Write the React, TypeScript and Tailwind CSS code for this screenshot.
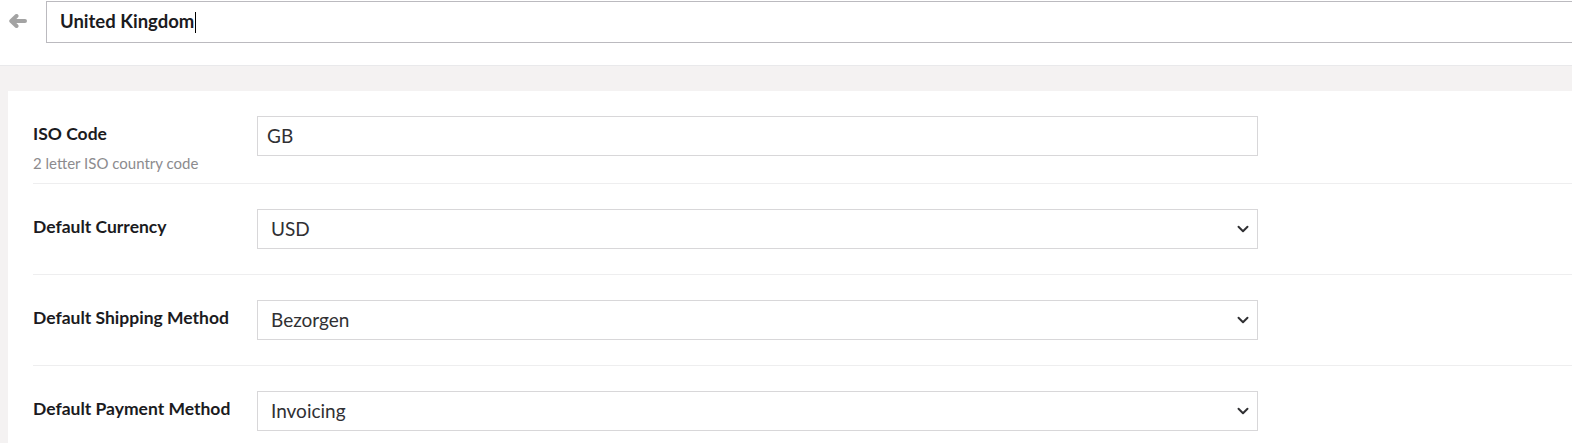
import { ChevronDown } from "lucide-react";

const rows = [
  { label: "Default Currency", value: "USD" },
  { label: "Default Shipping Method", value: "Bezorgen" },
  { label: "Default Payment Method", value: "Invoicing" },
];

function BackArrow() {
  return (
    <svg width="18" height="14" viewBox="0 0 18 14" className="text-[#a3a3a3]">
      <path
        d="M7.5 2 L2.3 7 L7.5 12 M2.8 7 H16"
        fill="none"
        stroke="currentColor"
        strokeWidth="4"
        strokeLinecap="round"
        strokeLinejoin="round"
      />
    </svg>
  );
}

function SelectBox({ value }: { value: string }) {
  return (
    <div className="flex h-[40px] w-[1001px] items-center justify-between border border-[#d8d7d9] bg-white pl-[13px] pr-[5px] text-[19px] text-[#303033]">
      <span>{value}</span>
      <ChevronDown className="size-[18px] text-[#303033]" strokeWidth={2.6} />
    </div>
  );
}

export default function App() {
  return (
    <div
      className="min-h-[443px] overflow-hidden bg-[#f4f2f2]"
      style={{ fontFamily: "Lato, 'Noto Sans', sans-serif" }}
    >
      <div className="flex h-[66px] items-start border-b border-[#e9e9eb] bg-white pt-[1px]">
        <div className="flex h-[40px] w-[46px] items-center pl-[9px]">
          <BackArrow />
        </div>
        <div className="-mr-[20px] flex h-[42px] flex-1 items-center border border-[#bbbabf] bg-white pl-[13px] text-[18.5px] font-bold text-[#1b1b1e]">
          United Kingdom
          <span className="ml-[1px] inline-block h-[21px] w-[1px] bg-black" />
        </div>
      </div>

      <div className="pl-[8px] pt-[25px]">
        <div className="-mr-[20px] bg-white pl-[25px] pt-[25px]">
          <div className="flex border-b border-[#eeeeef] pb-[12px]">
            <div className="w-[224px]">
              <div className="flex h-[36px] items-center text-[17.5px] font-bold text-[#1b1b1e]">
                ISO Code
              </div>
              <div className="mt-[3px] text-[15px] leading-[16px] text-[#8c8b8e]">
                2 letter ISO country code
              </div>
            </div>
            <div className="flex h-[40px] w-[1001px] items-center border border-[#d8d7d9] pl-[9px] text-[19px] text-[#303033]">
              GB
            </div>
          </div>

          {rows.map((r, i) => (
            <div
              key={r.label}
              className={
                i < rows.length - 1
                  ? "flex border-b border-[#eeeeef] pb-[25px] pt-[25px]"
                  : "flex pb-[25px] pt-[25px]"
              }
            >
              <div className="flex h-[36px] w-[224px] items-center text-[17.5px] font-bold text-[#1b1b1e]">
                {r.label}
              </div>
              <SelectBox value={r.value} />
            </div>
          ))}
        </div>
      </div>
    </div>
  );
}
